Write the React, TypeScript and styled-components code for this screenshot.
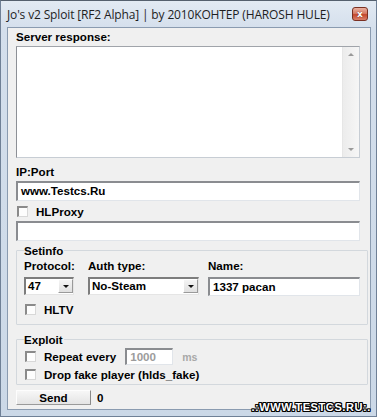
import React from 'react';
import styled, { createGlobalStyle } from 'styled-components';

const GlobalStyle = createGlobalStyle`
  html, body {
    margin: 0;
    padding: 0;
    background: #dfe8f2;
  }
  * {
    box-sizing: border-box;
  }
`;

const Window = styled.div`
  position: relative;
  width: 377px;
  height: 417px;
  display: flex;
  flex-direction: column;
  background: linear-gradient(180deg, #e2eaf3 0px, #d4dfec 28px, #cbd8e7 100%);
  border: 1px solid #6f8096;
  border-top-color: #55606e;
  overflow: hidden;
`;

const TitleBar = styled.div`
  height: 26px;
  flex: none;
  display: flex;
  align-items: center;
  justify-content: space-between;
  padding: 1px 6px 0 6px;
`;

const Title = styled.span`
  font-family: 'Open Sans', 'Noto Sans', sans-serif;
  font-size: 12px;
  color: #1e1e1e;
  letter-spacing: -0.15px;
  white-space: nowrap;
`;

const CloseButton = styled.div`
  width: 16px;
  height: 14px;
  margin-top: -1px;
  margin-right: 2px;
  border-radius: 3px;
  border: 1px solid #7a3022;
  background: linear-gradient(180deg, #eab0a0 0%, #d67c66 45%, #c4472d 55%, #d9806a 100%);
  display: flex;
  align-items: center;
  justify-content: center;
  color: #fff;
  font-family: 'DejaVu Sans', sans-serif;
  font-weight: bold;
  font-size: 9px;
  line-height: 1;
  text-shadow: 0 0 1px #5a1a10;
`;

const Client = styled.div`
  flex: 1;
  margin: 0 5px 6px 6px;
  background: #f0f0f0;
  border: 1px solid #8a9bb0;
  padding: 2px 2px 0 8px;
  display: flex;
  flex-direction: column;
  font-family: 'Liberation Sans', Arial, sans-serif;
  font-size: 11.6px;
  font-weight: bold;
  color: #000;
`;

const Label = styled.div<{ $top?: number }>`
  height: 13px;
  line-height: 13px;
  margin-top: ${(p) => p.$top ?? 0}px;
  white-space: nowrap;
`;

const ResponseBox = styled.div`
  margin-top: 3px;
  width: 344px;
  height: 112px;
  background: #fff;
  border: 1px solid #c7cdd4;
  border-top-color: #a0a4aa;
  border-left-color: #8d9096;
  display: flex;
  justify-content: flex-end;
`;

const ScrollTrack = styled.div`
  width: 17px;
  height: 100%;
  background: linear-gradient(90deg, #ececec, #f6f6f6);
  border-left: 1px solid #e6e6e6;
  display: flex;
  flex-direction: column;
  justify-content: space-between;
  align-items: center;
  padding: 6px 0 6px;
`;

const Arrow = styled.div<{ $down?: boolean }>`
  width: 0;
  height: 0;
  border-left: 3px solid transparent;
  border-right: 3px solid transparent;
  ${(p) =>
    p.$down
      ? 'border-top: 3px solid #9a9a9a;'
      : 'border-bottom: 3px solid #9a9a9a;'}
`;

const TextField = styled.div<{ $width?: number; $top?: number; $muted?: boolean }>`
  width: ${(p) => p.$width ?? 344}px;
  height: 20px;
  margin-top: ${(p) => p.$top ?? 0}px;
  background: #fff;
  border: 1px solid #e1e5ea;
  border-top: 2px solid #8a8c90;
  border-left: 2px solid #8a8c90;
  padding: 0 3px;
  line-height: 16px;
  color: ${(p) => (p.$muted ? '#9c9c9c' : '#000')};
  white-space: nowrap;
`;

const SmallField = styled(TextField)`
  height: 17px;
  line-height: 13px;
  margin-left: 9px;
`;

const Row = styled.div<{ $top?: number }>`
  display: flex;
  align-items: center;
  margin-top: ${(p) => p.$top ?? 0}px;
`;

const CheckBox = styled.div`
  width: 11px;
  height: 11px;
  margin-left: 1px;
  margin-right: 8px;
  flex: none;
  background: #fdfdfd;
  border: 1px solid #d8d8d8;
  border-top: 2px solid #8a8a8a;
  border-left: 2px solid #8a8a8a;
`;

const Group = styled.fieldset<{ $top?: number; $height: number }>`
  margin: ${(p) => p.$top ?? 0}px 0 0 0;
  width: 352px;
  height: ${(p) => p.$height}px;
  border: 1px solid #d3d8dd;
  border-radius: 1px;
  padding: 0 0 0 7px;
  min-width: 0;
`;

const Legend = styled.legend`
  padding: 0 1px 0 0;
  margin-left: 0;
  line-height: 13px;
`;

const Columns = styled.div`
  display: flex;
  margin-top: 2px;
`;

const Col = styled.div<{ $width: number }>`
  width: ${(p) => p.$width}px;
  display: flex;
  flex-direction: column;
`;

const Combo = styled.div<{ $width: number }>`
  width: ${(p) => p.$width}px;
  height: 18px;
  margin-top: 5px;
  display: flex;
  background: #fff;
  border: 1px solid #e5e5e5;
  border-top: 2px solid #7d7d7d;
  border-left: 2px solid #7d7d7d;
`;

const ComboText = styled.div`
  flex: 1;
  padding-left: 2px;
  line-height: 14px;
  white-space: nowrap;
`;

const ComboButton = styled.div`
  width: 15px;
  height: 14px;
  background: linear-gradient(180deg, #f4f4f4, #e0e0e0);
  border: 1px solid #ffffff;
  border-right-color: #9a9a9a;
  border-bottom-color: #9a9a9a;
  display: flex;
  align-items: center;
  justify-content: center;
`;

const ComboArrow = styled.div`
  width: 0;
  height: 0;
  border-left: 3px solid transparent;
  border-right: 3px solid transparent;
  border-top: 3px solid #111;
  margin-top: 1px;
`;

const NameField = styled(TextField)`
  height: 19px;
  margin-top: 5px;
  line-height: 15px;
`;

const Muted = styled.span`
  color: #a8a8a8;
  margin-left: 9px;
  font-size: 10.5px;
`;

const SendButton = styled.div`
  width: 75px;
  height: 15px;
  line-height: 13px;
  text-align: center;
  background: linear-gradient(180deg, #f7f7f7, #e4e4e4);
  border: 1px solid #fdfdfd;
  border-right: 1px solid #8a8a8a;
  border-bottom: 1px solid #9a9a9a;
`;

const Counter = styled.span`
  margin-left: 6px;
`;

const Watermark = styled.div`
  position: absolute;
  right: 5px;
  bottom: 3px;
  font-family: 'Liberation Sans', Arial, sans-serif;
  font-weight: bold;
  font-size: 11px;
  line-height: 11px;
  letter-spacing: 0.6px;
  color: #fff;
  text-shadow: 1px 0 0 #000, -1px 0 0 #000, 0 1px 0 #000, 0 -1px 0 #000,
    1px 1px 0 #000, -1px -1px 0 #000, 1px -1px 0 #000, -1px 1px 0 #000;
`;

export default function App() {
  return (
    <>
      <GlobalStyle />
      <Window>
        <TitleBar>
          <Title>Jo's v2 Sploit [RF2 Alpha] | by 2010KOHTEP (HAROSH HULE)</Title>
          <CloseButton>x</CloseButton>
        </TitleBar>
        <Client>
          <Label>Server response:</Label>
          <ResponseBox>
            <ScrollTrack>
              <Arrow />
              <Arrow $down />
            </ScrollTrack>
          </ResponseBox>

          <Label $top={7}>IP:Port</Label>
          <TextField $top={3}>www.Testcs.Ru</TextField>

          <Row $top={4}>
            <CheckBox />
            <span>HLProxy</span>
          </Row>
          <TextField $top={3} />

          <Group $top={3} $height={81}>
            <Legend>Setinfo</Legend>
            <Columns>
              <Col $width={64}>
                <span>Protocol:</span>
                <Combo $width={50}>
                  <ComboText>47</ComboText>
                  <ComboButton>
                    <ComboArrow />
                  </ComboButton>
                </Combo>
              </Col>
              <Col $width={120}>
                <span>Auth type:</span>
                <Combo $width={111}>
                  <ComboText>No-Steam</ComboText>
                  <ComboButton>
                    <ComboArrow />
                  </ComboButton>
                </Combo>
              </Col>
              <Col $width={153}>
                <span>Name:</span>
                <NameField $width={152}>1337 pacan</NameField>
              </Col>
            </Columns>
            <Row $top={7}>
              <CheckBox />
              <span>HLTV</span>
            </Row>
          </Group>

          <Group $top={8} $height={52}>
            <Legend>Exploit</Legend>
            <Row $top={2}>
              <CheckBox />
              <span>Repeat every</span>
              <SmallField $width={48} $muted>
                1000
              </SmallField>
              <Muted>ms</Muted>
            </Row>
            <Row $top={3}>
              <CheckBox />
              <span>Drop fake player (hlds_fake)</span>
            </Row>
          </Group>

          <Row $top={5}>
            <SendButton>Send</SendButton>
            <Counter>0</Counter>
          </Row>
        </Client>
        <Watermark>.:WWW.TESTCS.RU:.</Watermark>
      </Window>
    </>
  );
}
